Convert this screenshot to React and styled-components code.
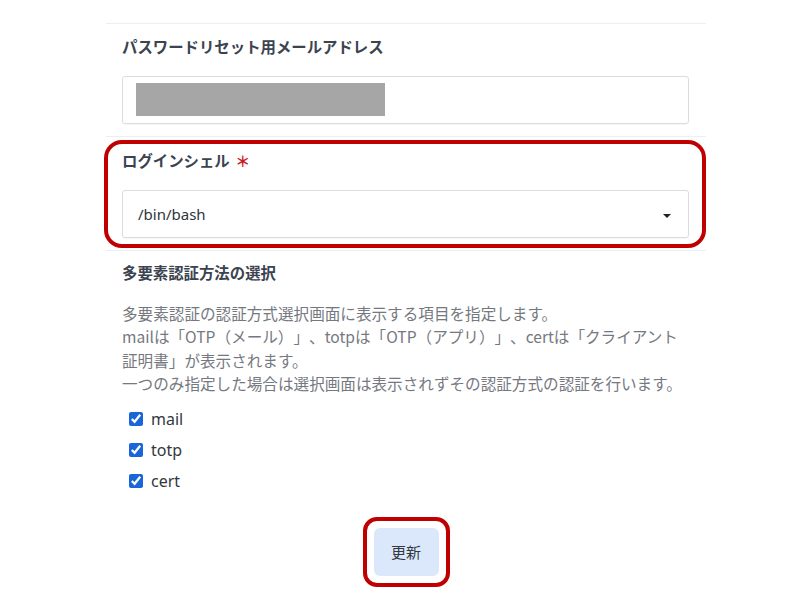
import styled, { createGlobalStyle } from "styled-components";

const Global = createGlobalStyle`
  body {
    margin: 0;
    background: #ffffff;
    font-family: "Noto Sans", "Noto Sans CJK JP", sans-serif;
    text-spacing-trim: space-all;
  }
`;

export default function App() {
  return (
    <>
      <Global />
      <Page>
        <Row $top={11} $bottom={12}>
          <Label>パスワードリセット用メールアドレス</Label>
          <Input>
            <Redacted />
          </Input>
        </Row>
        <Row $top={0} $bottom={0}>
          <Highlight>
            <Label>
              ログインシェル <Required>＊</Required>
            </Label>
            <Select>
              <span>/bin/bash</span>
              <Caret />
            </Select>
          </Highlight>
        </Row>
        <Row $top={10} $bottom={0}>
          <Label>多要素認証方法の選択</Label>
          <Help>
            多要素認証の認証方式選択画面に表示する項目を指定します。
            <br />
            mailは「OTP（メール）」、totpは「OTP（アプリ）」、certは「クライアント
            <br />
            証明書」が表示されます。
            <br />
            一つのみ指定した場合は選択画面は表示されずその認証方式の認証を行います。
          </Help>
          <Checks>
            {["mail", "totp", "cert"].map((m) => (
              <Check key={m}>
                <input type="checkbox" defaultChecked />
                <span>{m}</span>
              </Check>
            ))}
          </Checks>
        </Row>
        <Footer>
          <ButtonMark>
            <Button>更新</Button>
          </ButtonMark>
        </Footer>
      </Page>
    </>
  );
}

const Page = styled.div`
  width: 600px;
  margin-left: 106px;
  padding-top: 23px;
`;

const Row = styled.div`
  border-top: 1px solid #eceef1;
  padding: ${(p) => p.$top}px 17px ${(p) => p.$bottom}px 16px;
`;

const Label = styled.div`
  font-family: "Noto Sans CJK JP", "Noto Sans", sans-serif;
  font-size: 15.4px;
  line-height: 22px;
  font-weight: 700;
  color: #3c4350;
`;

const Required = styled.span`
  color: #d0191d;
  font-size: 15px;
  margin-left: 2px;
`;

const Input = styled.div`
  margin-top: 19px;
  height: 48px;
  box-sizing: border-box;
  border: 1px solid #d9dce0;
  border-radius: 3px;
  box-shadow: 0 1px 1px rgba(0, 0, 0, 0.04);
  padding: 6px 13px;
`;

const Redacted = styled.div`
  width: 249px;
  height: 33px;
  background: #a6a6a6;
`;

const Highlight = styled.div`
  margin: 3px -17px 2px -18px;
  border: 4px solid #c00000;
  border-radius: 18px;
  padding: 5px 13px 6px 14px;
`;

const Select = styled.div`
  margin-top: 18px;
  height: 48px;
  box-sizing: border-box;
  border: 1px solid #d9dce0;
  border-radius: 3px;
  box-shadow: 0 1px 1px rgba(0, 0, 0, 0.04);
  padding: 0 17px 0 15px;
  display: flex;
  align-items: center;
  justify-content: space-between;
  font-size: 15px;
  color: #2f343b;
`;

const Caret = styled.div`
  width: 0;
  height: 0;
  border-left: 4px solid transparent;
  border-right: 4px solid transparent;
  border-top: 4px solid #222;
  margin-top: 3px;
`;

const Help = styled.div`
  margin-top: 19px;
  font-family: "Noto Sans CJK JP", "Noto Sans", sans-serif;
  font-size: 15.6px;
  line-height: 23.4px;
  color: #75797f;
  white-space: nowrap;
`;

const Checks = styled.div`
  margin-top: 12px;
  display: flex;
  flex-direction: column;
  gap: 9px;
`;

const Check = styled.label`
  display: flex;
  align-items: center;
  gap: 8px;
  height: 22px;
  padding-left: 7px;
  font-size: 16px;
  color: #333840;

  input {
    margin: 0;
    width: 14px;
    height: 14px;
    accent-color: #1a66d9;
  }
`;

const Footer = styled.div`
  display: flex;
  justify-content: center;
  padding-top: 25px;
`;

const ButtonMark = styled.div`
  border: 4px solid #c00000;
  border-radius: 14px;
  padding: 7px;
`;

const Button = styled.button`
  width: 65px;
  height: 48px;
  border: none;
  border-radius: 6px;
  background: #dbe8fb;
  font-family: "Noto Sans CJK JP", "Noto Sans", sans-serif;
  font-size: 15px;
  color: #333840;
  display: flex;
  align-items: center;
  justify-content: center;
  padding: 0;
`;
